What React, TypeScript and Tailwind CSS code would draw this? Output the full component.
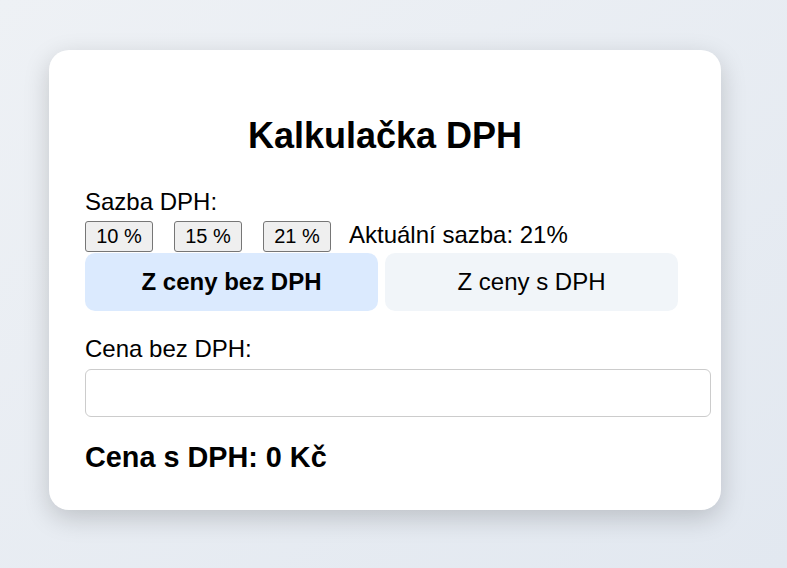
import { useState } from 'react';

const RATES = [10, 15, 21];

export default function App() {
  const [rate, setRate] = useState(21);
  const [mode, setMode] = useState<'bez' | 's'>('bez');
  const [value, setValue] = useState('');

  const num = parseFloat(value.replace(',', '.')) || 0;
  const result = mode === 'bez' ? num * (1 + rate / 100) : num / (1 + rate / 100);
  const shown = Math.round(result * 100) / 100;

  return (
    <div className="min-h-screen w-full bg-gradient-to-br from-[#eef1f5] to-[#e2e8f0] pt-[50px] pl-[49px] font-['Liberation_Sans',Arial,sans-serif] text-black">
      <div className="w-[672px] rounded-[20px] bg-white px-[36px] pt-[65px] pb-[36px] shadow-[0_8px_26px_rgba(0,0,0,0.18)]">
        <h1 className="text-center text-[36px] leading-[41px] font-bold">Kalkulačka DPH</h1>

        <div className="mt-[32px] text-[24px] leading-[28px]">Sazba DPH:</div>
        <div className="mt-[5px] flex items-baseline">
          {RATES.map((r, i) => (
            <button
              key={r}
              onClick={() => setRate(r)}
              className={`${i > 0 ? 'ml-[21px]' : ''} w-[68px] rounded-[3px] border border-[#767676] bg-[#efefef] py-[3px] text-center text-[20px] leading-[23px] hover:bg-[#e5e5e5]`}
            >
              {r} %
            </button>
          ))}
          <span className="ml-[18px] text-[24px] leading-[28px]">Aktuální sazba: {rate}%</span>
        </div>

        <div className="mt-[1px] flex gap-[7px]">
          <button
            onClick={() => setMode('bez')}
            className={`h-[58px] w-[293px] rounded-[10px] text-[24px] ${mode === 'bez' ? 'bg-[#dbeafe] font-bold' : 'bg-[#f1f5f9]'}`}
          >
            Z ceny bez DPH
          </button>
          <button
            onClick={() => setMode('s')}
            className={`h-[58px] w-[293px] rounded-[10px] text-[24px] ${mode === 's' ? 'bg-[#dbeafe] font-bold' : 'bg-[#f1f5f9]'}`}
          >
            Z ceny s DPH
          </button>
        </div>

        <div className="mt-[24px] text-[24px] leading-[28px]">{mode === 'bez' ? 'Cena bez DPH:' : 'Cena s DPH:'}</div>
        <input
          type="text"
          value={value}
          onChange={(e) => setValue(e.target.value)}
          className="mt-[6px] block h-[48px] w-[626px] rounded-[6px] border border-[#cccccc] px-[12px] text-[24px] outline-none"
        />

        <h2 className="mt-[24px] text-[28.8px] leading-[33px] font-bold">
          {mode === 'bez' ? 'Cena s DPH' : 'Cena bez DPH'}: {shown} Kč
        </h2>
      </div>
    </div>
  );
}
